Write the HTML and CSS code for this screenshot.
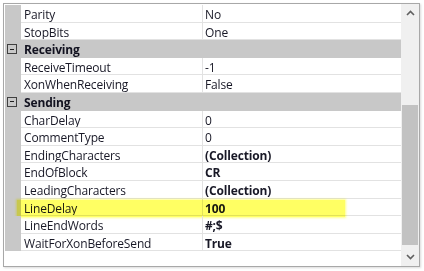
FILE: index.html
```html
<!DOCTYPE html>
<html>
<head>
<meta charset="utf-8">
<link rel="stylesheet" href="styles.css">
</head>
<body>
<div class="frame">
  <div class="grid">
    <div class="row"><div class="gutter"></div><div class="name">Parity</div><div class="value">No</div></div>
    <div class="row"><div class="gutter"></div><div class="name">StopBits</div><div class="value">One</div></div>
    <div class="row cat"><div class="gutter"><span class="toggle"></span></div><div class="catname">Receiving</div></div>
    <div class="row"><div class="gutter"></div><div class="name">ReceiveTimeout</div><div class="value">-1</div></div>
    <div class="row"><div class="gutter"></div><div class="name">XonWhenReceiving</div><div class="value">False</div></div>
    <div class="row cat"><div class="gutter"><span class="toggle"></span></div><div class="catname">Sending</div></div>
    <div class="row"><div class="gutter"></div><div class="name">CharDelay</div><div class="value">0</div></div>
    <div class="row"><div class="gutter"></div><div class="name">CommentType</div><div class="value">0</div></div>
    <div class="row"><div class="gutter"></div><div class="name">EndingCharacters</div><div class="value bold">(Collection)</div></div>
    <div class="row"><div class="gutter"></div><div class="name">EndOfBlock</div><div class="value bold">CR</div></div>
    <div class="row"><div class="gutter"></div><div class="name">LeadingCharacters</div><div class="value bold">(Collection)</div></div>
    <div class="row"><div class="gutter"></div><div class="name">LineDelay</div><div class="value bold">100</div><div class="highlight"></div></div>
    <div class="row"><div class="gutter"></div><div class="name">LineEndWords</div><div class="value bold">#;$</div></div>
    <div class="row"><div class="gutter"></div><div class="name">WaitForXonBeforeSend</div><div class="value bold">True</div></div>
  </div>
  <div class="scrollbar">
    <div class="arrow">
      <svg width="9" height="6" viewBox="0 0 9 6"><path d="M1 5 L4.5 1.5 L8 5" fill="none" stroke="#606060" stroke-width="1.6"/></svg>
    </div>
    <div class="track"><div class="thumb"></div></div>
    <div class="arrow">
      <svg width="9" height="6" viewBox="0 0 9 6"><path d="M1 1 L4.5 4.5 L8 1" fill="none" stroke="#606060" stroke-width="1.6"/></svg>
    </div>
  </div>
</div>
</body>
</html>
```

FILE: styles.css
```css
html, body {
  margin: 0;
  padding: 0;
  background: #ffffff;
}
body {
  width: 424px;
  height: 271px;
  overflow: hidden;
  font-family: "Open Sans", "Noto Sans", sans-serif;
  font-size: 12px;
  letter-spacing: -0.15px;
  color: #181826;
}
.frame {
  margin: 3px 0 0 3px;
  width: 415px;
  height: 262px;
  border: 1px solid #a8a8a8;
  display: flex;
  background: #ffffff;
  box-shadow: 1px 1px 2px rgba(0,0,0,0.15);
}
.grid {
  flex: 1;
  padding-top: 1px;
  padding-left: 1px;
  display: flex;
  flex-direction: column;
  overflow: hidden;
}
.row {
  position: relative;
  display: flex;
  height: 17.6px;
  flex: none;
}
.gutter {
  width: 16px;
  flex: none;
  background: #c8c8c8;
  position: relative;
}
.name {
  width: 182px;
  flex: none;
  padding: 2px 0 0 3px;
  box-sizing: border-box;
  height: 100%;
  border-bottom: 1px solid #e2e2e2;
  border-right: 1px solid #e2e2e2;
  line-height: 16px;
  white-space: nowrap;
  overflow: hidden;
}
.value {
  flex: 1;
  padding: 2px 0 0 2px;
  box-sizing: border-box;
  height: 100%;
  border-bottom: 1px solid #e2e2e2;
  line-height: 16px;
  white-space: nowrap;
  overflow: hidden;
}
.value.bold {
  font-weight: 700;
}
.cat {
  background: #c8c8c8;
}
.catname {
  flex: 1;
  font-weight: 700;
  padding: 2px 0 0 3px;
  line-height: 16px;
  color: #121220;
}
.toggle {
  position: absolute;
  left: 2px;
  top: 4px;
  width: 8px;
  height: 8px;
  border: 1px solid #404040;
}
.toggle::after {
  content: "";
  position: absolute;
  left: 2px;
  top: 3.5px;
  width: 4px;
  height: 1px;
  background: #202020;
}
.highlight {
  position: absolute;
  left: 12px;
  top: 1px;
  width: 328px;
  height: 17px;
  background: rgba(255, 255, 60, 0.8);
  box-shadow: 0 0 2px 1px rgba(255, 255, 60, 0.6);
  mix-blend-mode: multiply;
  pointer-events: none;
}
.scrollbar {
  width: 18px;
  flex: none;
  background: #f0f0f0;
  display: flex;
  flex-direction: column;
}
.arrow {
  height: 18px;
  display: flex;
  align-items: center;
  justify-content: center;
  flex: none;
}
.track {
  flex: 1;
  display: flex;
  flex-direction: column;
  justify-content: flex-end;
  padding: 0 1px 3px 1px;
}
.thumb {
  height: 140px;
  background: #c2c2c2;
}
```
